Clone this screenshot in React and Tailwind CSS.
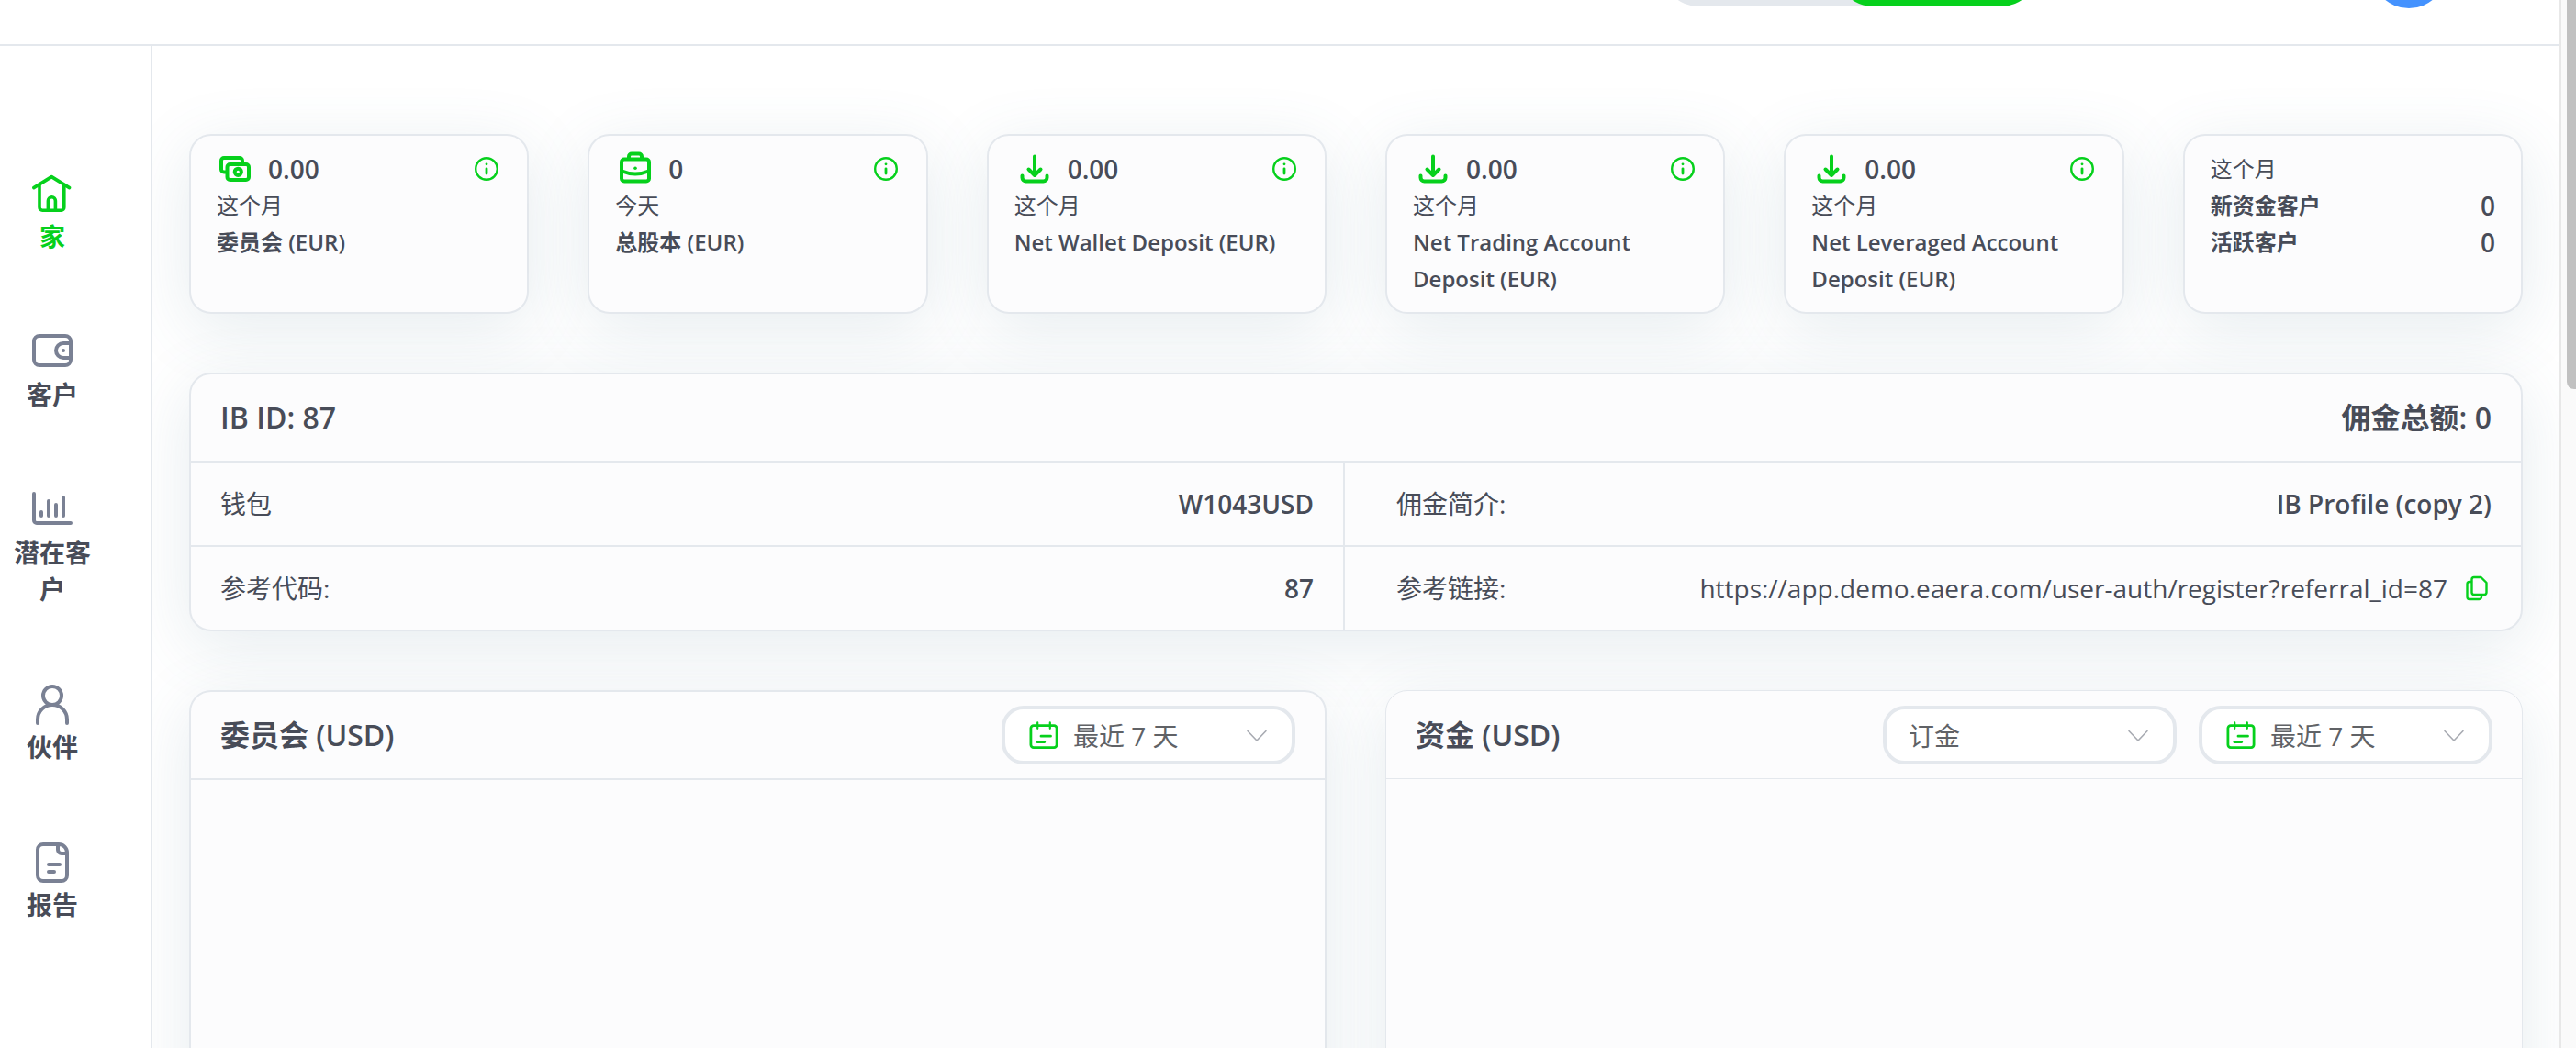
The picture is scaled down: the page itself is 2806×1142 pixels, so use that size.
import { useState } from 'react'
import clsx from 'clsx'

const NAV = [
  { id: 'home', label: '家', icon: HomeIcon },
  { id: 'clients', label: '客户', icon: WalletIcon },
  { id: 'leads', label: '潜在客户', icon: ChartIcon },
  { id: 'partners', label: '伙伴', icon: UserIcon },
  { id: 'reports', label: '报告', icon: ReportIcon },
]

const STATS = [
  { value: '0.00', period: '这个月', label: '委员会 (EUR)', icon: MoneyIcon },
  { value: '0', period: '今天', label: '总股本 (EUR)', icon: BriefcaseIcon },
  { value: '0.00', period: '这个月', label: 'Net Wallet Deposit (EUR)', icon: DepositIcon },
  { value: '0.00', period: '这个月', label: 'Net Trading Account Deposit (EUR)', icon: DepositIcon },
  { value: '0.00', period: '这个月', label: 'Net Leveraged Account Deposit (EUR)', icon: DepositIcon },
]

const LINK = 'https://app.demo.eaera.com/user-auth/register?referral_id=87'

function NavSvg({ children, width = 2 }) {
  return (
    <svg viewBox="0 0 24 24" className="size-12" fill="none" stroke="currentColor" strokeWidth={width} strokeLinecap="round" strokeLinejoin="round">
      {children}
    </svg>
  )
}

function HomeIcon() {
  return (
    <NavSvg width={1.8}>
      <path d="M1.9 9.3 11.6 3.3l9.7 6" />
      <path d="M5 8v12a1.6 1.6 0 0 0 1.6 1.6h10.2a1.6 1.6 0 0 0 1.6-1.6V8" />
      <path d="M9.7 21.4v-5a2 2 0 0 1 4 0v5" />
    </NavSvg>
  )
}

function WalletIcon() {
  return (
    <NavSvg>
      <rect x="2" y="4" width="20" height="16" rx="3" />
      <path d="M22 8h-4a4 4 0 0 0 0 8h4" />
      <circle cx="18" cy="12" r="1" fill="currentColor" stroke="none" />
    </NavSvg>
  )
}

function ChartIcon() {
  return (
    <NavSvg>
      <path d="M2 4v14.5A1.5 1.5 0 0 0 3.5 20H22" />
      <path d="M6 14v2M10 8v8M14 10v6M18 6v10" />
    </NavSvg>
  )
}

function UserIcon() {
  return (
    <NavSvg>
      <circle cx="12" cy="8" r="5" />
      <path d="M4 23v-2a8 8 0 0 1 16 0v2" />
    </NavSvg>
  )
}

function ReportIcon() {
  return (
    <NavSvg>
      <path d="M15.5 3H7a3 3 0 0 0-3 3v14a3 3 0 0 0 3 3h10a3 3 0 0 0 3-3V7.5A4.5 4.5 0 0 0 15.5 3z" />
      <path d="M15 3.2V6a2 2 0 0 0 2 2h2.8" />
      <path d="M10 14h6M10 18h3" />
    </NavSvg>
  )
}

function MoneyIcon() {
  return (
    <svg viewBox="0 0 40 40" className="size-10" fill="none" stroke="currentColor" strokeWidth="4" strokeLinecap="round" strokeLinejoin="round">
      <rect x="11.5" y="15" width="23.5" height="17" rx="3" />
      <path d="M28 13v-2a3 3 0 0 0-3-3H8a3 3 0 0 0-3 3v9.5a3 3 0 0 0 3 3h2" />
      <circle cx="23.3" cy="23.3" r="3.6" />
    </svg>
  )
}

function BriefcaseIcon() {
  return (
    <svg viewBox="-2 -1 42 42" className="size-[42px]" fill="none" stroke="currentColor" strokeWidth="4" strokeLinecap="round" strokeLinejoin="round">
      <rect x="5" y="9.5" width="30" height="24" rx="3" />
      <path d="M13 9V6.5a3 3 0 0 1 3-3h8a3 3 0 0 1 3 3V9" />
      <path d="M5.5 22.5c9 3.8 20 3.8 29 0" />
      <circle cx="20" cy="19.2" r="1.8" fill="currentColor" stroke="none" />
    </svg>
  )
}

function DepositIcon() {
  return (
    <svg viewBox="0 1 42 42" className="size-[42px]" fill="none" stroke="currentColor" strokeWidth="4" strokeLinecap="round" strokeLinejoin="round">
      <path d="M22 8.5V28M15.5 22.5l6.5 6.5 6.5-6.5" />
      <path d="M8.5 29.5v2a4 4 0 0 0 4 4h19a4 4 0 0 0 4-4v-2" />
    </svg>
  )
}

function InfoIcon() {
  return (
    <svg viewBox="0 0 32 32" className="size-8" fill="none" stroke="currentColor" strokeWidth="2.4" strokeLinecap="round">
      <circle cx="16" cy="16" r="11.8" />
      <path d="M16 15.8v5.2" strokeWidth="2.8" />
      <circle cx="16" cy="10.8" r="1.4" fill="currentColor" stroke="none" />
    </svg>
  )
}

function CopyIcon() {
  return (
    <svg viewBox="0 0 32 32" className="size-8" fill="none" stroke="currentColor" strokeWidth="2.4" strokeLinejoin="round" strokeLinecap="round">
      <path d="M13 4h7.5l6 6v10.5A2.5 2.5 0 0 1 24 23H13a2.500 2.500 0 0 1-2.500-2.500v-14A2.500 2.500 0 0 1 13 4z" />
      <path d="M10 9H8a2.500 2.500 0 0 0-2.500 2.500v14A2.500 2.500 0 0 0 8 28h10.500a2.500 2.500 0 0 0 2.500-2.500v-2" />
    </svg>
  )
}

function CalendarIcon() {
  return (
    <svg viewBox="0 0 32 32" className="size-8" fill="none" stroke="currentColor" strokeWidth="2.8" strokeLinecap="round" strokeLinejoin="round">
      <rect x="1.9" y="5.6" width="28.2" height="24" rx="3" />
      <path d="M9.2 2.4v6.4M22.800 2.4v6.400" strokeWidth="2.2" />
      <path d="M13 17.2h10.500M8.800 23.500h8" />
    </svg>
  )
}

function Select({ label, value, options, icon }) {
  return (
    <div className="relative w-80">
      {icon && <span className="absolute left-[30px] top-4 text-[#06d01c] pointer-events-none"><CalendarIcon /></span>}
      <select
        aria-label={label}
        defaultValue={value}
        className={clsx(
          'block w-full h-16 appearance-none rounded-3xl border-4 border-[#e4e8ed] bg-white pt-0.5 pr-16 text-[28px] leading-10 text-[#606266]',
          icon ? 'pl-[74px]' : 'pl-6'
        )}
      >
        {options.map(o => <option key={o}>{o}</option>)}
      </select>
      <svg viewBox="0 0 24 14" className="absolute right-[30px] top-[26px] w-6 h-[14px] pointer-events-none" fill="none" stroke="#a8abb2" strokeWidth="1.6" strokeLinecap="round" strokeLinejoin="round">
        <path d="M2 1.500 12 12 22 1.500" />
      </svg>
    </div>
  )
}

const card = 'rounded-3xl border-[#e4e8ed] bg-[#fcfcfd] shadow-[0_16px_72px_rgba(77,122,144,0.14)]'

function StatCard({ value, period, label, icon: Icon }) {
  return (
    <div className={clsx(card, 'border-2 px-7 py-4')}>
      <div className="h-10 flex items-center gap-4">
        <span className="text-[#06d01c]"><Icon /></span>
        <span className="flex-1 text-[28px] font-semibold">{value}</span>
        <button aria-label={label} className="text-[#06d01c]"><InfoIcon /></button>
      </div>
      <p>{period}</p>
      <p className="font-semibold">{label}</p>
    </div>
  )
}

function Row({ label, children, className }) {
  return (
    <div className={clsx('h-[90px] box-content flex items-center justify-between', className)}>
      <dt>{label}</dt>
      <dd className="flex items-center gap-4">{children}</dd>
    </div>
  )
}

export default function App() {
  const [active, setActive] = useState('home')
  const ranges = ['今天', '最近 7 天', '最近 30 天']

  return (
    <div className="h-screen overflow-hidden flex bg-white text-[#484c58] font-['Open_Sans','Noto_Sans_CJK_SC',sans-serif]">
      <div className="flex-1 min-w-0 flex flex-col">
        <header className="h-[50px] shrink-0 overflow-hidden flex flex-col justify-end border-b-2 border-[#e4e8ed]">
          <div className="h-[160px] shrink-0 flex items-center justify-end gap-[364px] pr-[123px]">
            <div className="w-[408px] h-[78px] rounded-full bg-[#e4e8ed] flex justify-end">
              <button aria-label="IB" className="w-[218px] rounded-full bg-[#06d01c]" />
            </div>
            <button aria-label="账户" className="size-[82px] rounded-full bg-[#4492fe]" />
          </div>
        </header>

        <div className="flex-1 min-h-0 flex">
          <nav className="w-[166px] shrink-0 border-r-2 border-[#e4e8ed] pt-[136px] pr-[50px] flex flex-col items-center gap-20">
            {NAV.map(({ id, label, icon: Icon }) => (
              <button
                key={id}
                onClick={() => setActive(id)}
                className={clsx('w-[98px] flex flex-col items-center gap-1 text-[28px] leading-10 font-semibold', active === id && 'text-[#06d01c]')}
              >
                <span className={active === id ? 'text-[#06d01c]' : 'text-[#7a8194]'}><Icon /></span>
                {label}
              </button>
            ))}
          </nav>

          <main className="flex-1 min-w-0 overflow-hidden px-10 pt-24 flex flex-col gap-16">
            <section className="grid grid-cols-6 gap-16 shrink-0 text-2xl leading-10">
              {STATS.map(s => <StatCard key={s.label} {...s} />)}
              <div className={clsx(card, 'border-2 px-7 py-4')}>
                <p>这个月</p>
                <p className="flex justify-between font-semibold">新资金客户 <span className="text-[28px]">0</span></p>
                <p className="flex justify-between font-semibold">活跃客户 <span className="text-[28px]">0</span></p>
              </div>
            </section>

            <section className={clsx(card, 'border-2 shrink-0')}>
              <div className="h-24 px-8 flex items-center justify-between border-b-2 border-[#e4e8ed] text-[32px] font-semibold">
                <h2>IB ID: 87</h2>
                <span>佣金总额: 0</span>
              </div>
              <dl className="flex text-[28px] leading-10">
                <div className="w-[calc(50%-12px)] border-r-2 border-[#e4e8ed] divide-y-2 divide-[#e4e8ed]">
                  <Row label="钱包" className="px-8"><span className="font-semibold">W1043USD</span></Row>
                  <Row label="参考代码:" className="px-8"><span className="font-semibold">87</span></Row>
                </div>
                <div className="flex-1 divide-y-2 divide-[#e4e8ed]">
                  <Row label="佣金简介:" className="pl-14 pr-8"><span className="font-semibold">IB Profile (copy 2)</span></Row>
                  <Row label="参考链接:" className="pl-14 pr-8">
                    {LINK}
                    <button aria-label="复制" className="text-[#06d01c]"><CopyIcon /></button>
                  </Row>
                </div>
              </dl>
            </section>

            <section className="flex-1 grid grid-cols-2 gap-16">
              <div className={clsx(card, 'border-2 min-h-[600px]')}>
                <div className="h-24 px-8 flex items-center justify-between border-b-2 border-[#e4e8ed]">
                  <h2 className="text-[32px] font-semibold">委员会 (USD)</h2>
                  <Select label="委员会" value="最近 7 天" options={ranges} icon />
                </div>
              </div>
              <div className={clsx(card, 'border min-h-[600px]')}>
                <div className="h-24 px-8 flex items-center gap-6 border-b border-[#e4e8ed]">
                  <h2 className="flex-1 text-[32px] font-semibold">资金 (USD)</h2>
                  <Select label="类型" value="订金" options={['订金', '提款']} />
                  <Select label="资金" value="最近 7 天" options={ranges} icon />
                </div>
              </div>
            </section>
          </main>
        </div>
      </div>

      {/* scroll track */}
      <div className="w-[18px] shrink-0 pl-[6px] border-l-2 border-[#e8e8e8] bg-[#fafafa]">
        <div className="h-[424px] rounded-bl-lg bg-[#c1c1c1]" />
      </div>
    </div>
  )
}
